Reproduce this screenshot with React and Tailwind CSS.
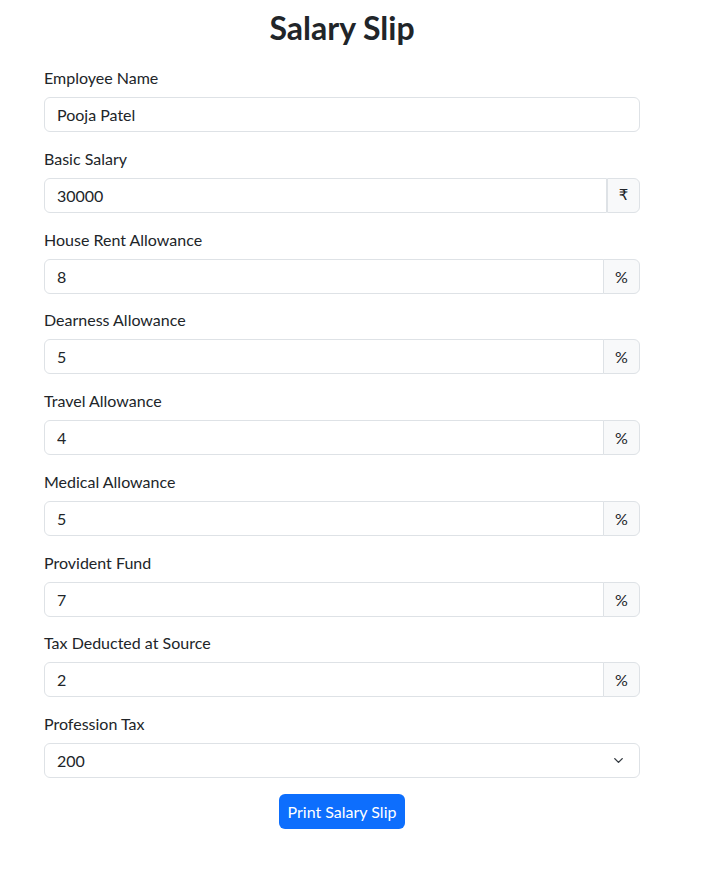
import { ChevronDown } from "lucide-react";

const fields = [
  { label: "Employee Name", value: "Pooja Patel", mb: "mb-[15px]" },
  { label: "Basic Salary", value: "30000", addon: "₹", mb: "mb-[15px]" },
  { label: "House Rent Allowance", value: "8", addon: "%", mb: "mb-[14px]" },
  { label: "Dearness Allowance", value: "5", addon: "%", mb: "mb-[15px]" },
  { label: "Travel Allowance", value: "4", addon: "%", mb: "mb-[15px]" },
  { label: "Medical Allowance", value: "5", addon: "%", mb: "mb-[15px]" },
  { label: "Provident Fund", value: "7", addon: "%", mb: "mb-[14px]" },
  { label: "Tax Deducted at Source", value: "2", addon: "%", mb: "mb-[15px]" },
];

function Field({ label, value, addon, mb }) {
  return (
    <div className={mb}>
      <label className="mb-[7px] block h-6 leading-6">{label}</label>
      <div className="flex h-[35px]">
        <input
          readOnly
          value={value}
          className={`h-full min-w-0 flex-1 border border-[#dee2e6] bg-white px-3 text-[#212529] outline-none ${
            addon ? "rounded-l-md" : "rounded-md"
          }`}
        />
        {addon === "₹" && (
          <span className="flex w-[33px] items-center justify-center rounded-r-md border border-[#dee2e6] bg-[#f8f9fa] font-['DejaVu_Sans',sans-serif] text-[15px]">
            ₹
          </span>
        )}
        {addon === "%" && (
          <span className="-ml-px flex w-[37px] items-center justify-center rounded-r-md border border-[#dee2e6] bg-[#f8f9fa]">
            %
          </span>
        )}
      </div>
    </div>
  );
}

export default function App() {
  return (
    <div className="min-h-[871px] bg-white font-['Lato',sans-serif] text-base text-[#212529]">
      <div className="ml-[44px] w-[596px] pt-2">
        <h1 className="mb-[18px] text-center text-[32px] font-bold leading-10">Salary Slip</h1>

        {fields.map((f) => (
          <Field key={f.label} {...f} />
        ))}

        <div>
          <label className="mb-[7px] block h-6 leading-6">Profession Tax</label>
          <div className="flex h-[35px] items-center justify-between rounded-md border border-[#dee2e6] bg-white pl-3 pr-[13px]">
            <span>200</span>
            <ChevronDown size={15} strokeWidth={2.25} className="text-[#343a40]" />
          </div>
        </div>

        <div className="mt-4 flex justify-center">
          <button className="h-[35px] w-[126px] rounded-md bg-[#0d6efd] text-white">Print Salary Slip</button>
        </div>
      </div>
    </div>
  );
}
